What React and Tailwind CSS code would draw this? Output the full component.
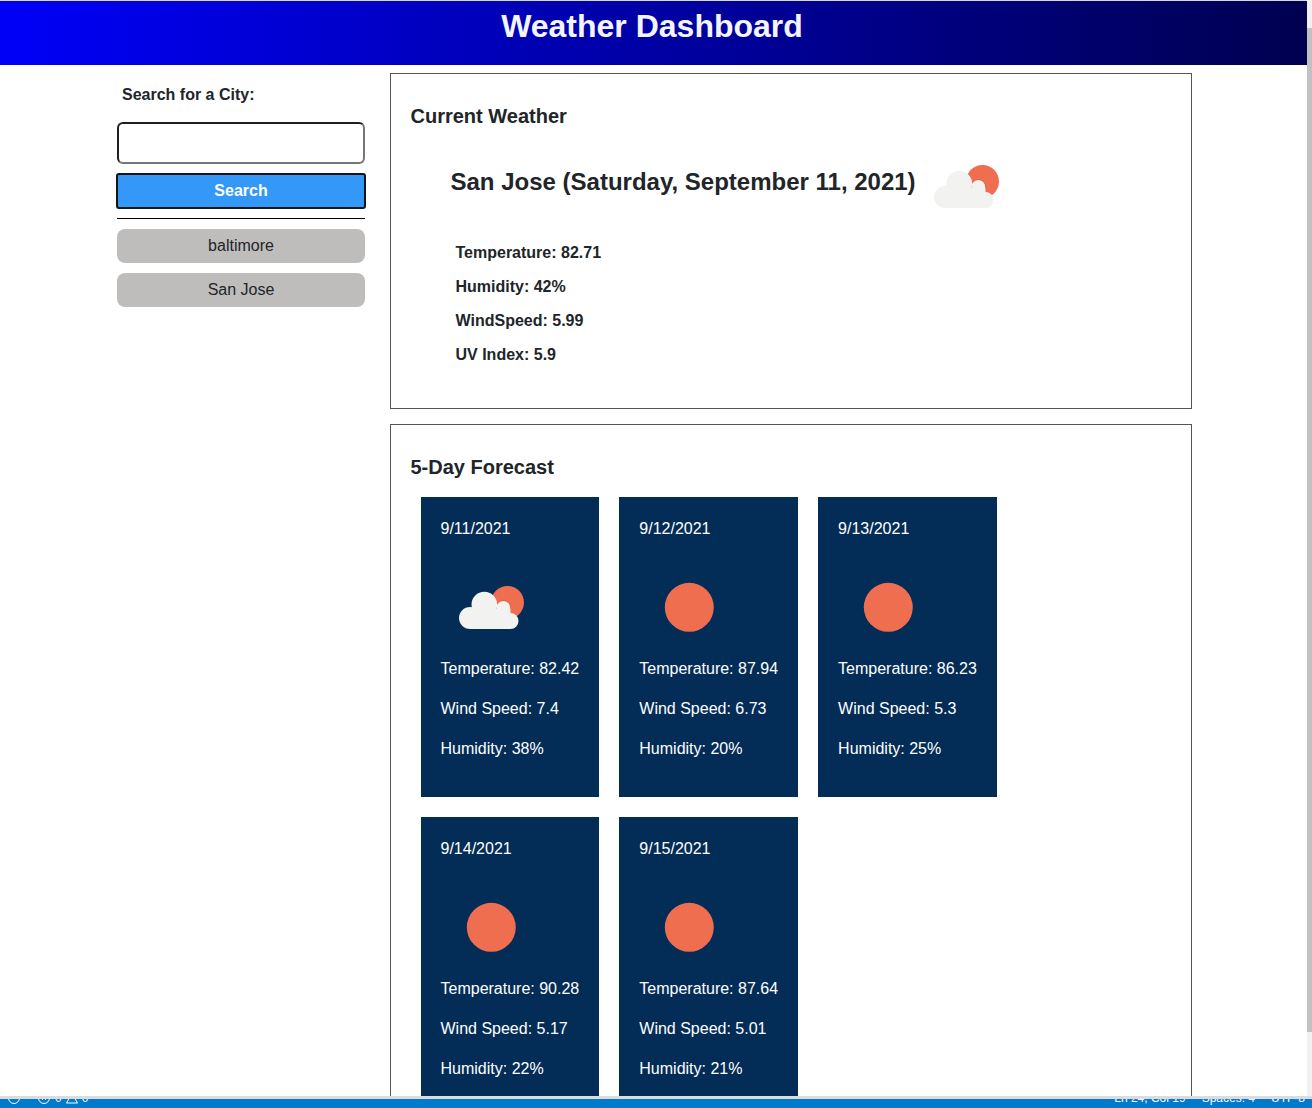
const FORECAST = [
  { date: '9/11/2021', temp: '82.42', wind: '7.4', humidity: '38%', cloudy: true },
  { date: '9/12/2021', temp: '87.94', wind: '6.73', humidity: '20%' },
  { date: '9/13/2021', temp: '86.23', wind: '5.3', humidity: '25%' },
  { date: '9/14/2021', temp: '90.28', wind: '5.17', humidity: '22%' },
  { date: '9/15/2021', temp: '87.64', wind: '5.01', humidity: '21%' },
]

function CloudSun({ offsetClass = '' }) {
  return (
    <svg className={`w-[100px] h-[100px] shrink-0 ${offsetClass}`} viewBox="0 0 100 100">
      <circle cx="66.500" cy="45.500" r="16.500" fill="#ee6e4f" />
      <circle cx="62.300" cy="51" r="7.700" fill="#d9603f" />
      <g fill="#f2f2f0">
        <circle cx="29" cy="61" r="11" />
        <circle cx="43.300" cy="47.500" r="12.800" />
        <circle cx="62.300" cy="51" r="7" />
        <circle cx="69.500" cy="64" r="8" />
        <rect x="29" y="52" width="40.500" height="20" />
      </g>
    </svg>
  )
}

function ForecastCard({ day }) {
  return (
    <div className="w-[178.800px] h-[300px] shrink-0 bg-[#032d56] text-white text-base leading-5 whitespace-nowrap px-5 pt-[22px]">
      <p>{day.date}</p>
      <div className="h-[100px] mt-[18px]">
        {day.cloudy ? (
          <CloudSun />
        ) : (
          <svg className="w-[100px] h-[100px]" viewBox="0 0 100 100">
            <circle cx="50.300" cy="50.300" r="24.500" fill="#ee6e4f" />
          </svg>
        )}
      </div>
      <p className="mt-0.5">Temperature: {day.temp}</p>
      <p className="mt-5">Wind Speed: {day.wind}</p>
      <p className="mt-5">Humidity: {day.humidity}</p>
    </div>
  )
}

export default function App() {
  return (
    <div className="h-[1108px] overflow-hidden flex flex-col bg-white text-[#212529] font-['Liberation_Sans',Arial,sans-serif]">
      <div className="h-[1096px] shrink-0 flex overflow-hidden">
        <div className="w-[1307px] shrink-0 overflow-hidden">
          <header className="h-[65px] border-t border-[#d8d8dc] bg-[linear-gradient(to_right,#0000f8,#000050)] text-center">
            <h1 className="text-[32px] leading-[50px] font-bold text-[#f4f4ff] pr-[3px]">Weather Dashboard</h1>
          </header>

          <div className="flex pl-[117px] pt-2 gap-[25px]">
            <aside className="w-[248px] shrink-0">
              <label className="block pl-[5px] pt-[13px] text-base leading-[18px] font-bold">Search for a City:</label>
              <input
                type="text"
                className="block w-full h-[42px] mt-[18px] bg-white rounded-[6px] border-2 border-t-[#1f1f1f] border-l-[#1f1f1f] border-r-[#767676] border-b-[#767676]"
              />
              <button className="block w-[250px] -ml-px h-[36px] mt-[9px] rounded-[3px] border-2 border-[#141414] bg-[#3498f8] text-white text-base font-bold">
                Search
              </button>
              <hr className="mt-[9px] border-t border-black" />
              <button className="block w-full h-[34px] mt-[10px] rounded-[8px] bg-[#bfbdbc] text-base">baltimore</button>
              <button className="block w-full h-[34px] mt-[10px] rounded-[8px] bg-[#bfbdbc] text-base">San Jose</button>
            </aside>

            <main className="w-[802px] shrink-0">
              <section className="h-[336px] border border-[#555] pl-[19.500px] pt-[30px]">
                <h2 className="text-xl leading-6 font-bold">Current Weather</h2>
                <div className="flex items-start h-[100px] mt-2 pl-10">
                  <h3 className="text-2xl leading-7 font-bold whitespace-nowrap pt-8">San Jose (Saturday, September 11, 2021)</h3>
                  <CloudSun />
                </div>
                <div className="pl-[45px] text-base font-bold">
                  <p className="leading-[34px]">Temperature: 82.71</p>
                  <p className="leading-[34px]">Humidity: 42%</p>
                  <p className="leading-[34px]">WindSpeed: 5.99</p>
                  <p className="leading-[34px]">UV Index: 5.9</p>
                </div>
              </section>

              <section className="mt-[15px] h-[800px] border border-[#555] pl-[19.500px] pt-[30px]">
                <h2 className="text-xl leading-6 font-bold">5-Day Forecast</h2>
                <div className="flex flex-wrap w-[600px] gap-5 mt-[18px] pl-[10px]">
                  {FORECAST.map((day) => (
                    <ForecastCard key={day.date} day={day} />
                  ))}
                </div>
              </section>
            </main>
          </div>
        </div>

        {/* scrollbar strip */}
        <div className="flex-1 bg-[#f1f1f1] pt-[28px]">
          <div className="h-[1004px] bg-[#c1c1c1]" />
        </div>
      </div>

      {/* editor status bar, mostly cut off by the window edge */}
      <div className="flex-1 border-t-[3px] border-[#dcdcdf] bg-[#007acc] text-white text-xs overflow-hidden">
        <div className="flex justify-between leading-4 pl-2 pr-[7px] -mt-[9px]">
          <div className="flex items-center">
            <svg className="w-3 h-3" viewBox="0 0 12 12" fill="none" stroke="currentColor">
              <circle cx="6" cy="6" r="5.500" />
            </svg>
            <svg className="w-3 h-3 ml-[18px]" viewBox="0 0 12 12" fill="none" stroke="currentColor">
              <circle cx="6" cy="6" r="5.500" />
              <path d="M4 4l4 4M8 4l-4 4" />
            </svg>
            <span className="ml-[5px]">0</span>
            <svg className="w-3 h-3 ml-1" viewBox="0 0 12 12" fill="none" stroke="currentColor">
              <path d="M6 1L11.500 11H.500Z" />
            </svg>
            <span className="ml-1">0</span>
          </div>
          <div className="flex gap-4">
            <span>Ln 24, Col 19</span>
            <span>Spaces: 4</span>
            <span>UTF-8</span>
          </div>
        </div>
      </div>
    </div>
  )
}
